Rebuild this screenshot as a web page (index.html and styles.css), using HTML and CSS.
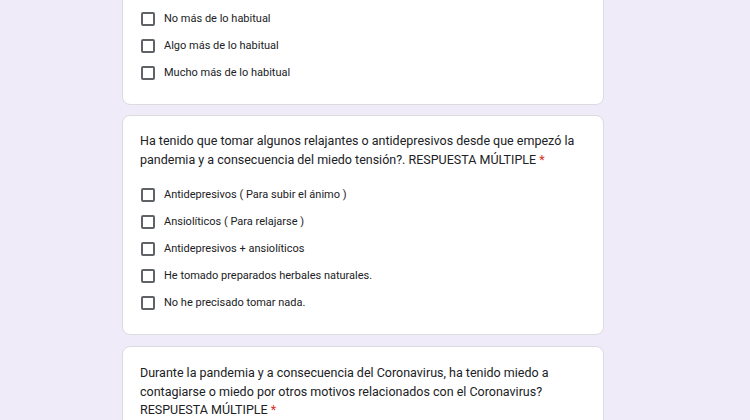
FILE: index.html
```html
<!DOCTYPE html>
<html lang="es">
<head>
    <meta charset="UTF-8">
    <title>Formulario</title>
    <link rel="stylesheet" href="styles.css">
</head>
<body>
    <div class="form-wrap">
        <div class="card card-cut">
            <div class="options">
                <label class="option"><span class="box"></span>No más de lo habitual</label>
                <label class="option"><span class="box"></span>Algo más de lo habitual</label>
                <label class="option"><span class="box"></span>Mucho más de lo habitual</label>
            </div>
        </div>

        <div class="card">
            <div class="question">Ha tenido que tomar algunos relajantes o antidepresivos desde que empezó la pandemia y a consecuencia del miedo tensión?. RESPUESTA MÚLTIPLE <span class="req">*</span></div>
            <div class="options">
                <label class="option"><span class="box"></span>Antidepresivos ( Para subir el ánimo )</label>
                <label class="option"><span class="box"></span>Ansiolíticos ( Para relajarse )</label>
                <label class="option"><span class="box"></span>Antidepresivos + ansiolíticos</label>
                <label class="option"><span class="box"></span>He tomado preparados herbales naturales.</label>
                <label class="option"><span class="box"></span>No he precisado tomar nada.</label>
            </div>
        </div>

        <div class="card card-last">
            <div class="question">Durante la pandemia y a consecuencia del Coronavirus, ha tenido miedo a contagiarse o miedo por otros motivos relacionados con el Coronavirus? RESPUESTA MÚLTIPLE <span class="req">*</span></div>
        </div>
    </div>
</body>
</html>
```

FILE: styles.css
```css
body {
    margin: 0;
    background-color: #f0ebf8;
    font-family: Roboto, "Liberation Sans", Arial, sans-serif;
    color: #202124;
    overflow: hidden;
}

.form-wrap {
    width: 482px;
    margin-left: 122px;
    display: flex;
    flex-direction: column;
    gap: 10px;
}

.card {
    background-color: #fff;
    border: 1px solid #dadce0;
    border-radius: 8px;
    padding: 16px 17px 18px;
}

.card-cut {
    margin-top: -20px;
    padding-top: 24px;
}

.card-last {
    margin-top: 1px;
    padding-top: 17px;
    padding-bottom: 60px;
}

.question {
    font-size: 12.5px;
    line-height: 18.5px;
    margin-bottom: 12px;
}

.req {
    color: #d93025;
}

.options {
    display: flex;
    flex-direction: column;
}

.option {
    display: flex;
    align-items: center;
    height: 27px;
    font-size: 11px;
}

.box {
    width: 14px;
    height: 14px;
    box-sizing: border-box;
    border: 2px solid #5f6368;
    border-radius: 2px;
    margin-left: 1px;
    margin-right: 9px;
}
```
